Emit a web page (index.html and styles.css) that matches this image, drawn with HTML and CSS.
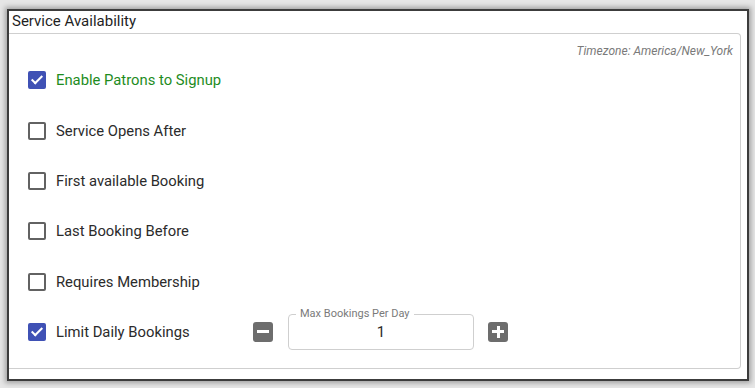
FILE: index.html
```html
<!DOCTYPE html>
<html lang="en">
<head>
    <meta charset="UTF-8">
    <meta name="viewport" content="width=device-width, initial-scale=1.0">
    <title>Service Availability</title>
    <link rel="stylesheet" href="styles.css">
</head>
<body>
    <div class="window">
        <div class="title">Service Availability</div>

        <div class="panel">
            <div class="timezone">Timezone: America/New_York</div>

            <div class="rows">
                <div class="row">
                    <label class="option">
                        <span class="box checked"></span>
                        <span class="label enabled">Enable Patrons to Signup</span>
                    </label>
                </div>
                <div class="row">
                    <label class="option">
                        <span class="box"></span>
                        <span class="label">Service Opens After</span>
                    </label>
                </div>
                <div class="row">
                    <label class="option">
                        <span class="box"></span>
                        <span class="label">First available Booking</span>
                    </label>
                </div>
                <div class="row">
                    <label class="option">
                        <span class="box"></span>
                        <span class="label">Last Booking Before</span>
                    </label>
                </div>
                <div class="row">
                    <label class="option">
                        <span class="box"></span>
                        <span class="label">Requires Membership</span>
                    </label>
                </div>
                <div class="row">
                    <label class="option">
                        <span class="box checked"></span>
                        <span class="label">Limit Daily Bookings</span>
                    </label>

                    <div class="stepper">
                        <button class="step-btn minus" type="button"></button>
                        <fieldset class="field">
                            <legend>Max Bookings Per Day</legend>
                            <div class="value">1</div>
                        </fieldset>
                        <button class="step-btn plus" type="button"></button>
                    </div>
                </div>
            </div>
        </div>
    </div>
</body>
</html>
```

FILE: styles.css
```css
:root {
    --accent: #3f51b5;
    --text: #2b2b2b;
    --muted: #7a7a7a;
    --line: #cfcfcf;
    --btn: #6d6d6d;
}

body {
    margin: 0;
    padding: 9px 6px 7px 7px;
    background-color: #e6e6e6;
    font-family: Roboto, 'Liberation Sans', Arial, sans-serif;
    color: var(--text);
}

.window {
    height: 368px;
    border: 2px solid #3c3c3c;
    background-color: white;
    box-shadow: 0 0 5px 2px rgba(0,0,0,0.3);
    display: flex;
    flex-direction: column;
}

.title {
    height: 22px;
    line-height: 20px;
    padding-left: 3px;
    font-size: 15px;
    color: #1f1f1f;
}

.panel {
    margin-right: 6px;
    border: 1px solid var(--line);
    border-left: none;
    border-radius: 0 4px 4px 0;
    padding: 11px 0 11px 19px;
}

.timezone {
    text-align: right;
    padding-right: 7px;
    font-size: 12px;
    line-height: 12px;
    font-style: italic;
    color: var(--muted);
}

.rows {
    margin-top: -2px;
}

.row {
    height: 50.4px;
    display: flex;
    align-items: center;
}

.option {
    width: 225px;
    display: flex;
    align-items: center;
    gap: 10px;
}

.box {
    width: 14px;
    height: 14px;
    border: 2px solid #626262;
    border-radius: 2px;
    position: relative;
}

.box.checked {
    background-color: var(--accent);
    border-color: var(--accent);
}

/* white tick */
.box.checked::after {
    content: '';
    position: absolute;
    left: 4px;
    top: 0px;
    width: 4px;
    height: 9px;
    border: solid white;
    border-width: 0 2px 2px 0;
    transform: rotate(45deg);
}

.label {
    font-size: 14.8px;
    line-height: 18px;
}

.label.enabled {
    color: #1e8c1e;
}

.stepper {
    display: flex;
    align-items: center;
    gap: 15px;
    margin-top: -6px;
}

.step-btn {
    width: 20px;
    height: 20px;
    padding: 0;
    border: none;
    border-radius: 3px;
    background-color: var(--btn);
    position: relative;
    margin-top: 6px;
}

.step-btn.plus {
    margin-left: -1px;
}

.step-btn::before,
.plus::after {
    content: '';
    position: absolute;
    left: 4px;
    top: 8px;
    width: 12px;
    height: 3px;
    background-color: white;
}

.plus::after {
    left: 8.5px;
    top: 4px;
    width: 3px;
    height: 12px;
}

.field {
    width: 184px;
    margin: 0;
    padding: 0;
    border: 1px solid var(--line);
    border-radius: 4px;
}

.field legend {
    margin-left: 7px;
    padding: 0 4px;
    font-size: 11px;
    line-height: 12px;
    color: var(--muted);
}

.value {
    height: 29px;
    line-height: 24px;
    text-align: center;
    font-size: 15px;
    color: var(--text);
}
```
